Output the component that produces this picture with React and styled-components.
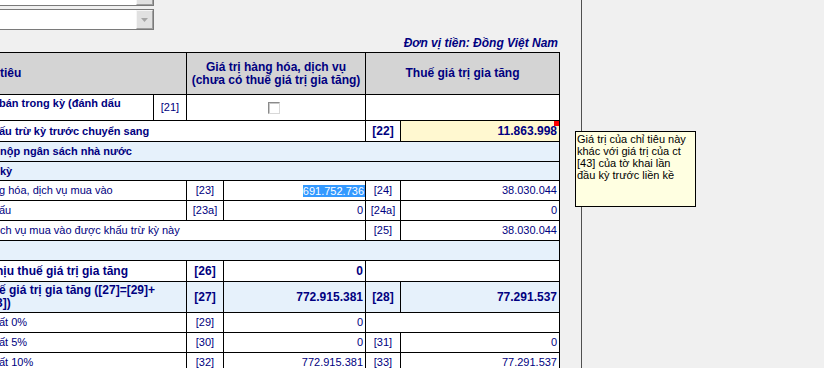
import React from 'react';
import styled, { createGlobalStyle } from 'styled-components';

const INK = '#000080';
const tones = {
  plain: '#FFFFFF',
  head: '#D4D4D4',
  band: '#E6F1FB',
  note: '#FFF8D0',
};

const GlobalStyle = createGlobalStyle`
  html, body { margin: 0; padding: 0; background: #F0F0F0; }
  body { font-family: "Liberation Sans", Arial, sans-serif; }
`;

const Page = styled.div`
  position: relative;
  display: flex;
  width: 824px;
  height: 368px;
  overflow: hidden;
  background: #F0F0F0;
`;

const FormPane = styled.div`
  flex: none;
  width: 581px;
  overflow: hidden;
`;

const FormBody = styled.div`
  display: flex;
  flex-direction: column;
  margin-top: -15px;
`;

const Divider = styled.div`
  flex: none;
  width: 1px;
  background: #505050;
`;

const SidePane = styled.div`
  flex: 1;
  background: #F0F0F0;
`;

const Combo = styled.div`
  display: flex;
  width: 154px;
  height: 21px;
  box-sizing: border-box;
  border: 1px solid #7A7A7A;
  border-left: none;
  background: #FFFFFF;
  & + & { margin-top: 3px; }
`;

const ComboButton = styled.div`
  margin-left: auto;
  width: 17px;
  height: 100%;
  box-sizing: border-box;
  display: flex;
  align-items: center;
  justify-content: center;
  background: #E1E1E1;
  border-top: 1px solid #F6F6F6;
  border-left: 1px solid #F6F6F6;
  border-right: 1px solid #A0A0A0;
  border-bottom: 1px solid #A0A0A0;
`;

const Caption = styled.div`
  width: 559px;
  box-sizing: border-box;
  margin-top: 6px;
  padding-right: 1px;
  height: 14px;
  line-height: 14px;
  text-align: right;
  font-size: 12px;
  font-weight: 700;
  font-style: italic;
  color: ${INK};
`;

const Sheet = styled.div`
  margin-top: 2px;
  display: grid;
  grid-template-columns: 153px 32px 36px 141px 34px 158px;
  grid-template-rows: 41px 25px 20px 19px 18px 19px 19px 19px 19px 20px 30px 19px 19px 19px;
  gap: 1px;
  padding: 1px 1px 1px 0;
  width: max-content;
  background: #000000;
`;

const Cell = styled.div`
  position: relative;
  grid-column: span ${p => p.$span || 1};
  display: flex;
  align-items: center;
  min-width: 0;
  overflow: hidden;
  white-space: nowrap;
  background: ${p => tones[p.$tone || 'plain']};
  color: ${INK};
  font-size: ${p => (p.$bold ? '12px' : '11px')};
  font-weight: ${p => (p.$bold ? 700 : 400)};
  line-height: 13px;
`;

const Head = styled(Cell)`
  justify-content: ${p => (p.$left ? 'flex-start' : 'center')};
  text-align: center;
  white-space: normal;
`;

const Label = styled(Cell)`
  justify-content: flex-start;
  align-items: ${p => (p.$top ? 'flex-start' : 'center')};
  padding-top: ${p => (p.$top ? '2px' : '0')};
  font-size: ${p => (p.$bold && !p.$large ? '11px' : p.$bold ? '12px' : '11px')};
`;

const Section = styled(Label)`
  grid-column: 1 / -1;
`;

const Code = styled(Cell)`
  justify-content: center;
`;

const Value = styled(Cell)`
  justify-content: flex-end;
  padding-right: ${p => (p.$flush ? '0' : '2px')};
`;

const Blank = styled(Cell)``;

const Lines = styled.div`
  display: flex;
  flex-direction: column;
`;

const Text = styled.span`
  display: block;
  margin-left: -${p => p.$cut || 0}px;
`;

const Selected = styled.span`
  background: #3399FF;
  color: #FFFFFF;
  padding-right: 1px;
  line-height: 12px;
`;

const Check = styled.span`
  width: 12px;
  height: 12px;
  box-sizing: border-box;
  margin-right: 5px;
  background: #FFFFFF;
  border-top: 1px solid #8A8A8A;
  border-left: 1px solid #8A8A8A;
  border-right: 1px solid #D8D8D8;
  border-bottom: 1px solid #D8D8D8;
  box-shadow: inset 1px 1px 0 #C8C8C8;
`;

const Marker = styled.span`
  position: absolute;
  top: 0;
  right: 0;
  width: 5px;
  height: 5px;
  background: #FF0000;
`;

const Tooltip = styled.div`
  position: absolute;
  left: 575px;
  top: 131px;
  width: 121px;
  height: 76px;
  box-sizing: border-box;
  padding: 1px 0 0 1px;
  border: 1px solid #000000;
  background: #FFFFE1;
  color: #000000;
  font-size: 11px;
  line-height: 12px;
  white-space: nowrap;
`;

const TipLine = styled.div``;

function ComboField() {
  return (
    <Combo>
      <ComboButton>
        <svg width="7" height="4" viewBox="0 0 7 4">
          <polygon points="0,0 7,0 3.5,4" fill="#A6A6A6" />
        </svg>
      </ComboButton>
    </Combo>
  );
}

export default function App() {
  return (
    <>
      <GlobalStyle />
      <Page>
        <FormPane>
          <FormBody>
            <ComboField />
            <ComboField />
            <Caption>Đơn vị tiền: Đồng Việt Nam</Caption>
            <Sheet>
              <Head $span={2} $tone="head" $bold $left>tiêu</Head>
              <Head $span={2} $tone="head" $bold>Giá trị hàng hóa, dịch vụ<br />(chưa có thuế giá trị gia tăng)</Head>
              <Head $span={2} $tone="head" $bold>Thuế giá trị gia tăng</Head>

              <Label $bold $top><Text $cut={1}>bán trong kỳ (đánh dấu</Text></Label>
              <Code>[21]</Code>
              <Code $span={2}><Check /></Code>
              <Blank $span={2} />

              <Label $span={4} $bold><Text $cut={1}>ấu trừ kỳ trước chuyển sang</Text></Label>
              <Code $bold>[22]</Code>
              <Value $bold $tone="note">11.863.998<Marker /></Value>

              <Section $tone="band" $bold><Text>nộp ngân sách nhà nước</Text></Section>
              <Section $tone="band" $bold><Text>kỳ</Text></Section>

              <Label $span={2}><Text $cut={1}>g hóa, dịch vụ mua vào</Text></Label>
              <Code>[23]</Code>
              <Value $flush><Selected>691.752.736</Selected></Value>
              <Code>[24]</Code>
              <Value>38.030.044</Value>

              <Label $span={2}><Text $cut={1}>ấu</Text></Label>
              <Code>[23a]</Code>
              <Value>0</Value>
              <Code>[24a]</Code>
              <Value>0</Value>

              <Label $span={4}><Text>ch vụ mua vào được khấu trừ kỳ này</Text></Label>
              <Code>[25]</Code>
              <Value>38.030.044</Value>

              <Section $tone="band" />

              <Label $span={2} $bold $large><Text $cut={4}>hịu thuế giá trị gia tăng</Text></Label>
              <Code $bold>[26]</Code>
              <Value $bold>0</Value>
              <Blank $span={2} />

              <Label $span={2} $bold $large $tone="band">
                <Lines>
                  <Text $cut={1}>ế giá trị gia tăng ([27]=[29]+</Text>
                  <Text $cut={4}>3])</Text>
                </Lines>
              </Label>
              <Code $bold $tone="band">[27]</Code>
              <Value $bold $tone="band">772.915.381</Value>
              <Code $bold $tone="band">[28]</Code>
              <Value $bold $tone="band">77.291.537</Value>

              <Label $span={2}><Text $cut={1}>ất 0%</Text></Label>
              <Code>[29]</Code>
              <Value>0</Value>
              <Blank $span={2} />

              <Label $span={2}><Text $cut={1}>ất 5%</Text></Label>
              <Code>[30]</Code>
              <Value>0</Value>
              <Code>[31]</Code>
              <Value>0</Value>

              <Label $span={2}><Text $cut={1}>ất 10%</Text></Label>
              <Code>[32]</Code>
              <Value>772.915.381</Value>
              <Code>[33]</Code>
              <Value>77.291.537</Value>
            </Sheet>
          </FormBody>
        </FormPane>
        <Divider />
        <SidePane />
        <Tooltip>
          <TipLine>Giá trị của chỉ tiêu này</TipLine>
          <TipLine>khác với giá trị của ct</TipLine>
          <TipLine>[43] của tờ khai lần</TipLine>
          <TipLine>đầu kỳ trước liền kề</TipLine>
        </Tooltip>
      </Page>
    </>
  );
}
